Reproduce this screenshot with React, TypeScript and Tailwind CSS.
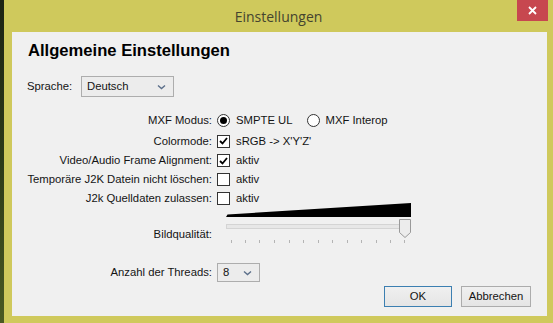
import { ReactNode } from "react";

const ui = "font-['Liberation_Sans',Arial,sans-serif] text-[11.3px] text-[#141414]";

function Chevron() {
  return (
    <svg width="9" height="6" viewBox="0 0 9 6" className="shrink-0">
      <path d="M1 1.5 L4.5 4.5 L8 1.5" fill="none" stroke="#5b6f8a" strokeWidth="1.4" />
    </svg>
  );
}

function Select({ value, width }: { value: string; width: string }) {
  return (
    <div
      className={`${width} flex items-center justify-between border border-[#adadad] bg-[#ececec] pl-[5px] pr-[7px]`}
    >
      <span>{value}</span>
      <Chevron />
    </div>
  );
}

function Check({ checked }: { checked?: boolean }) {
  return (
    <div className="flex h-[13px] w-[13px] shrink-0 items-center justify-center border border-[#333] bg-white">
      {checked && (
        <svg width="9" height="8" viewBox="0 0 9 8">
          <path d="M1 4 L3.5 6.5 L8 1" fill="none" stroke="#000" strokeWidth="1.8" />
        </svg>
      )}
    </div>
  );
}

function Radio({ checked }: { checked?: boolean }) {
  return (
    <div className="flex h-[13px] w-[13px] shrink-0 items-center justify-center rounded-full border border-[#333] bg-white">
      {checked && <div className="h-[7px] w-[7px] rounded-full bg-black" />}
    </div>
  );
}

function Row({ label, height, children }: { label: string; height: string; children?: ReactNode }) {
  return (
    <div className={`flex items-center ${height}`}>
      <div className="w-[200px] shrink-0 text-right">{label}</div>
      <div className="ml-[5px] flex items-center">{children}</div>
    </div>
  );
}

function Slider() {
  // tick positions relative to the slider's left edge
  const ticks = [5, 19, 33, 48, 63, 77, 92, 106, 121, 135, 150, 164, 178];
  return (
    <svg width="186" height="43" viewBox="0 0 186 43">
      <polygon points="0,15 1.5,12.5 185,1 185,15" fill="#000" />
      <rect x="0.5" y="22.5" width="184" height="4" fill="#e7e7e7" stroke="#d4d4d4" />
      <path d="M173.5 17.5 H184.5 V30.5 L179 35.5 L173.5 30.5 Z" fill="#ececec" stroke="#9a9a9a" />
      {ticks.map((t) => (
        <line key={t} x1={t + 0.5} x2={t + 0.5} y1="38" y2="41" stroke="#b4b4b4" />
      ))}
    </svg>
  );
}

function Button({ label, def, width }: { label: string; def?: boolean; width: string }) {
  return (
    <div
      className={`${width} flex h-[21px] items-center justify-center border bg-gradient-to-b from-[#f0f0f0] to-[#e5e5e5] ${
        def ? "border-[#3c7fb1]" : "border-[#acacac]"
      }`}
    >
      {label}
    </div>
  );
}

export default function App() {
  return (
    <div className="flex h-[323px] w-[553px] overflow-hidden">
      <div className="w-[4px] bg-gradient-to-b from-[#1d2414] via-[#2c3a18] to-[#4a5a22]" />
      <div className="flex flex-1 flex-col bg-[#cfc95c]">
        {/* title bar */}
        <div className="relative flex h-[32px] items-center justify-center">
          <span className="font-['Open_Sans',sans-serif] text-[14px] text-[#44442f]">Einstellungen</span>
          <div className="absolute right-[5px] top-0 flex h-[21px] w-[31px] items-center justify-center bg-[#c7474f]">
            <svg width="9" height="9" viewBox="0 0 9 9">
              <path d="M1 1 L8 8 M8 1 L1 8" stroke="#fff" strokeWidth="1.8" />
            </svg>
          </div>
        </div>

        {/* client area */}
        <div className={`ml-[8px] mr-[6px] flex h-[284px] flex-col bg-[#f0f0f0] ${ui}`}>
          <div className="box-content flex h-[24px] items-center pl-[16px] pt-[7px]">
            <span className="text-[16.6px] font-bold text-black">Allgemeine Einstellungen</span>
          </div>

          <div className="mt-[13px] flex h-[21px] items-center pl-[15px]">
            <span className="w-[54px]">Sprache:</span>
            <Select value="Deutsch" width="w-[93px] h-[21px]" />
          </div>

          <div className="mt-[12px]">
            <Row label="MXF Modus:" height="h-[22px]">
              <Radio checked />
              <span className="ml-[6px]">SMPTE UL</span>
              <div className="ml-[14px]">
                <Radio />
              </div>
              <span className="ml-[6px]">MXF Interop</span>
            </Row>
            <Row label="Colormode:" height="h-[20px]">
              <Check checked />
              <span className="ml-[6px]">sRGB -&gt; X&apos;Y&apos;Z&apos;</span>
            </Row>
            <Row label="Video/Audio Frame Alignment:" height="h-[19px]">
              <Check checked />
              <span className="ml-[6px]">aktiv</span>
            </Row>
            <Row label="Temporäre J2K Datein nicht löschen:" height="h-[19px]">
              <Check />
              <span className="ml-[6px]">aktiv</span>
            </Row>
            <Row label="J2k Quelldaten zulassen:" height="h-[19px]">
              <Check />
              <span className="ml-[6px]">aktiv</span>
            </Row>
          </div>

          <div className="-mt-[6px] flex h-[43px]">
            <div className="w-[200px] shrink-0 pt-[24px] text-right">Bildqualität:</div>
            <div className="ml-[14px]">
              <Slider />
            </div>
          </div>

          <div className="mt-[18px]">
            <Row label="Anzahl der Threads:" height="h-[19px]">
              <Select value="8" width="w-[43px] h-[19px]" />
            </Row>
          </div>

          <div className="mt-[4px] flex justify-end gap-[9px] pr-[16px]">
            <Button label="OK" def width="w-[68px]" />
            <Button label="Abbrechen" width="w-[70px]" />
          </div>
        </div>
      </div>
    </div>
  );
}
